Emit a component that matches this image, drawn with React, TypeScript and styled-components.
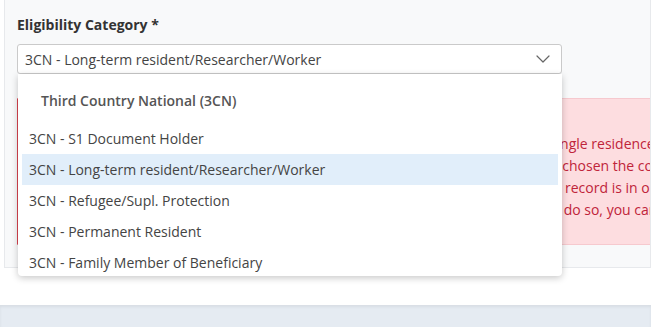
import styled, { createGlobalStyle } from 'styled-components';
import { ChevronDown } from 'lucide-react';

const GlobalStyle = createGlobalStyle`
  html, body {
    margin: 0;
    padding: 0;
    background: #ffffff;
    font-family: "Open Sans", "Liberation Sans", Arial, sans-serif;
  }
`;

const Page = styled.div`
  width: 651px;
  height: 327px;
  overflow: hidden;
  display: flex;
  flex-direction: column;
`;

const Card = styled.div`
  margin-left: 4px;
  height: 268px;
  box-sizing: border-box;
  background: #f8f9fa;
  border: 1px solid #e7e9ec;
  border-top: none;
  padding: 14px 0 0 12px;
`;

const Label = styled.div`
  font-size: 14px;
  font-weight: 700;
  line-height: 22px;
  color: #333333;
  margin-bottom: 8px;
`;

const Field = styled.div`
  position: relative;
  width: 545px;
`;

const SelectBox = styled.div`
  height: 30px;
  box-sizing: border-box;
  background: #ffffff;
  border: 1px solid #cacaca;
  border-radius: 3px;
  display: flex;
  align-items: center;
  padding: 0 6px 0 7px;
  font-size: 14px;
  color: #444444;
`;

const Value = styled.span`
  flex: 1;
`;

const Caret = styled.span`
  display: flex;
  color: #666666;
`;

const Menu = styled.div`
  position: absolute;
  top: 30px;
  left: 1px;
  width: 544px;
  height: 202px;
  box-sizing: border-box;
  overflow: hidden;
  background: #ffffff;
  border-radius: 0 0 4px 4px;
  box-shadow: 0 2px 7px rgba(0, 0, 0, 0.22);
  padding: 4px 4px 0;
  z-index: 10;
`;

const GroupHeader = styled.div`
  height: 45px;
  display: flex;
  align-items: center;
  padding-left: 19px;
  font-size: 14px;
  font-weight: 600;
  color: #555555;
`;

const Option = styled.div<{ active?: boolean }>`
  height: 31px;
  display: flex;
  align-items: center;
  padding-left: 7px;
  font-size: 14px;
  color: #444444;
  background: ${p => (p.active ? '#e1eefa' : 'transparent')};
`;

const Alert = styled.div`
  margin-top: 24px;
  height: 147px;
  box-sizing: border-box;
  background: #fddde0;
  border: 1px solid #f6c9ce;
  border-left: 1px solid #d9434f;
  border-right: none;
  padding: 12px 0 0 40px;
  color: #c0243a;
  font-size: 14px;
  white-space: nowrap;
  overflow: hidden;
`;

const AlertTitle = styled.div`
  font-weight: 700;
  line-height: 22px;
`;

const AlertLine = styled.div`
  line-height: 22px;
`;

const Footer = styled.div`
  flex: 1;
  display: flex;
  flex-direction: column;
`;

const Spacer = styled.div`
  height: 37px;
  background: #ffffff;
`;

const Bar = styled.div`
  flex: 1;
  background: #e5ebf2;
  box-shadow: inset 0 2px 3px rgba(0, 0, 0, 0.06);
`;

const options = [
  '3CN - S1 Document Holder',
  '3CN - Long-term resident/Researcher/Worker',
  '3CN - Refugee/Supl. Protection',
  '3CN - Permanent Resident',
  '3CN - Family Member of Beneficiary',
];

export default function App() {
  return (
    <Page>
      <GlobalStyle />
      <Card>
        <Label>Eligibility Category *</Label>
        <Field>
          <SelectBox>
            <Value>3CN - Long-term resident/Researcher/Worker</Value>
            <Caret>
              <ChevronDown size={24} strokeWidth={1.2} />
            </Caret>
          </SelectBox>
          <Menu>
            <GroupHeader>Third Country National (3CN)</GroupHeader>
            {options.map(o => (
              <Option key={o} active={o === options[1]}>
                {o}
              </Option>
            ))}
          </Menu>
        </Field>
        <Alert>
          <AlertTitle>Attention</AlertTitle>
          <AlertLine>A student may only ever be registered under one particular category with a single residence status.</AlertLine>
          <AlertLine>Please always make sure that you have carefully read all your guidelines, and chosen the correct category.</AlertLine>
          <AlertLine>If you are still unsure whether the current eligibility status now shown in your record is in order,</AlertLine>
          <AlertLine>Please contact one of our local offices directly. If you are currently not able to do so, you can call us.</AlertLine>
        </Alert>
      </Card>
      <Footer>
        <Spacer />
        <Bar />
      </Footer>
    </Page>
  );
}
